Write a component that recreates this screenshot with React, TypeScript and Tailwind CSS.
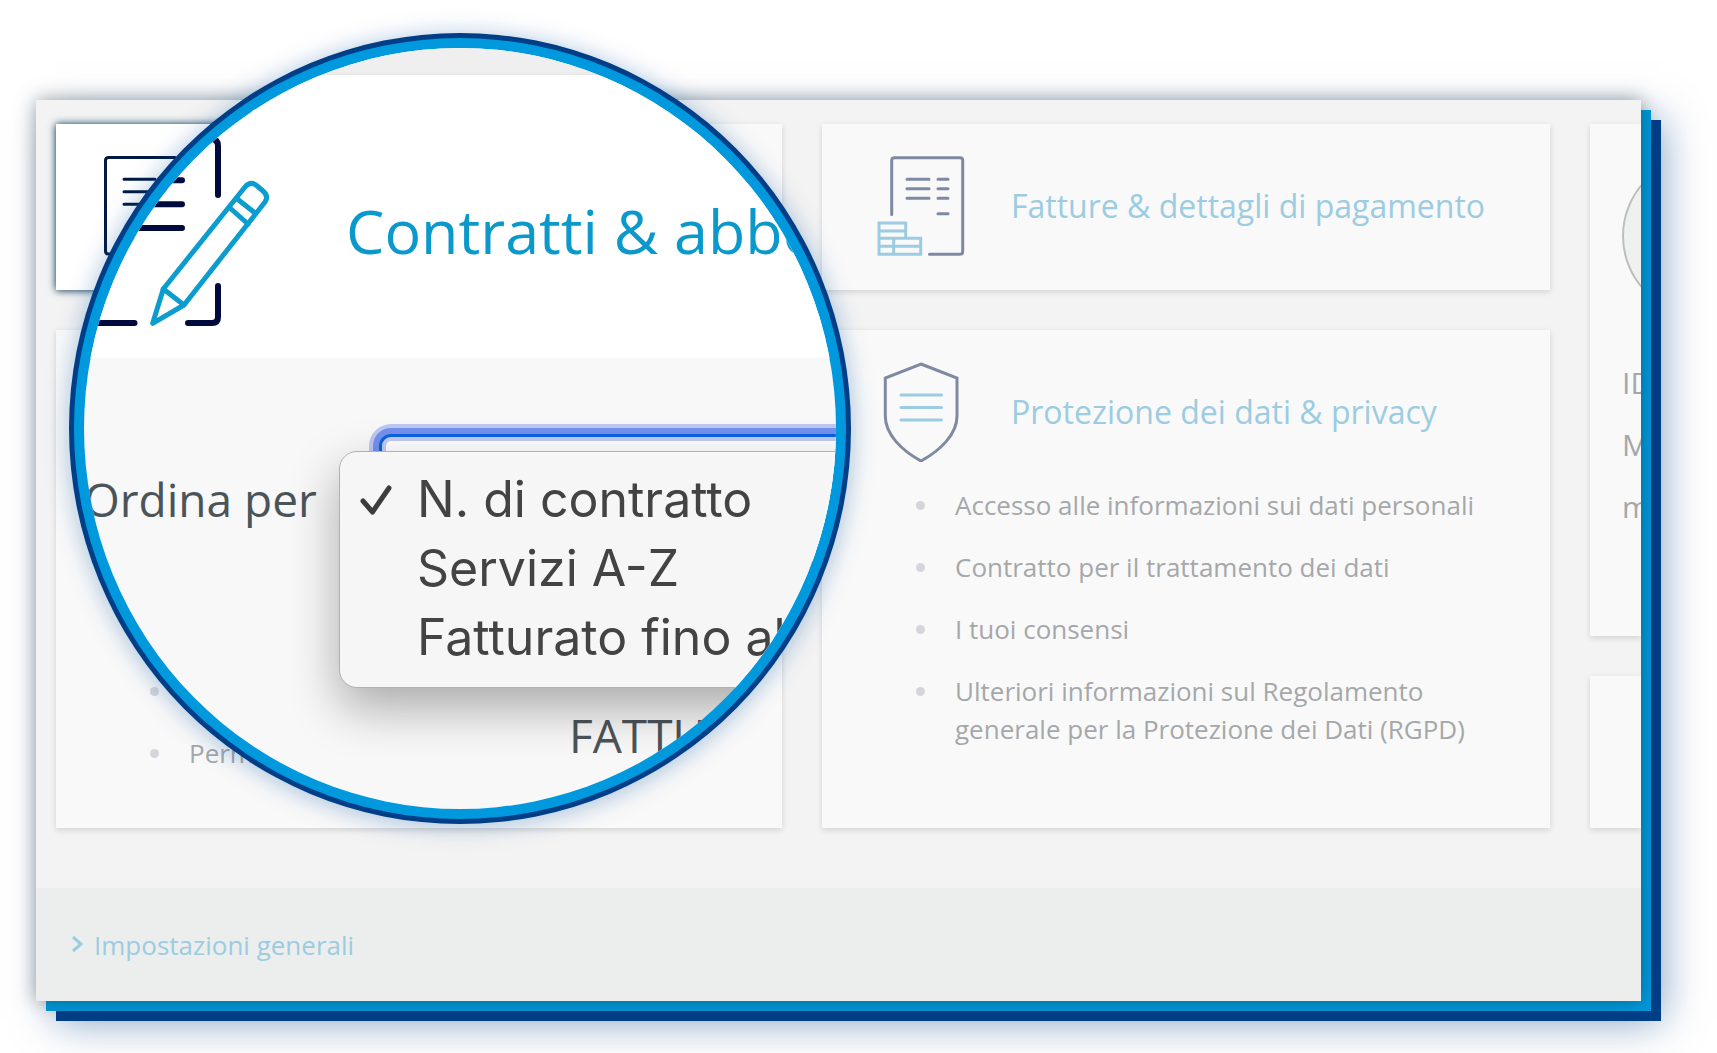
import React from 'react';

interface CardProps {
  title?: string;
  icon: React.ReactNode;
  items?: string[];
}

const privacyItems = [
  'Accesso alle informazioni sui dati personali',
  'Contratto per il trattamento dei dati',
  'I tuoi consensi',
  'Ulteriori informazioni sul Regolamento generale per la Protezione dei Dati (RGPD)',
];

const sortOptions = ['N. di contratto', 'Servizi A-Z', 'Fatturato fino al'];

const InvoiceIcon = () => (
  <svg viewBox="0 0 100 100" className="h-[100px] w-[100px] shrink-0" fill="none" strokeWidth="3" strokeLinecap="round" strokeLinejoin="round" aria-hidden="true">
    <g stroke="#7f89a2">
      <path d="M20.7 58.5V4.5Q20.7 1.7 23.5 1.7H89Q91.7 1.7 91.7 4.5V95.5Q91.7 98.3 89 98.3H58.5" />
      <path d="M36 23.3H58M36 32.7H58M36 42.3H58M67 23.3H77M67 32.7H77M67 42.3H77M67 57.7H77" />
    </g>
    <path stroke="#9ccce1" strokeLinejoin="miter" d="M8 67H34.7V82.3H49.7V98.3H8ZM8 75H34.7M8 82.3H34.7M8 90.3H49.7M22.7 82.3V98.3" />
  </svg>
);

const ShieldIcon = () => (
  <svg viewBox="0 0 100 100" className="h-[100px] w-[100px] shrink-0" fill="none" strokeWidth="3" strokeLinecap="round" aria-hidden="true">
    <path stroke="#7f89a2" d="M50 2L86 16V54C86 72 70 88 50 99C30 88 14.3 72 14.3 54V16Z" />
    <path stroke="#9ccce1" d="M30 33H70.5M30 45.5H70.5M30 58H70.5" />
  </svg>
);

const ContractIcon = () => (
  <svg viewBox="0 0 100 100" className="h-[100px] w-[100px] shrink-0" fill="none" stroke="#001a44" strokeWidth="3" strokeLinecap="round" aria-hidden="true">
    <path d="M71 1.5H4.5Q1.5 1.5 1.5 4.5V95Q1.5 98 4.5 98H41M20 23.3H51M20 35.7H51M20 48.3H51" />
  </svg>
);

const ContractIconLarge = () => (
  <svg viewBox="0 0 200 283" className="h-[283px] w-[200px] shrink-0" fill="none" strokeLinecap="round" strokeLinejoin="round" aria-hidden="true">
    <path stroke="#000b3b" strokeWidth="6" d="M110 64H127Q134 64 134 71V120M42 105.3H98M42 129.3H98M42 153H98M0 248H50.5M104 248H128Q134 248 134 242V211" />
    <g stroke="#0b9dd0" strokeWidth="5">
      <path d="M79.3 214L161 112Q166 106 172 110L179 116Q185 121 181 127L100 230L68.7 248.3Z" />
      <path d="M153.3 124L171 138M146 133L164 149M79.3 214L100 230" />
    </g>
  </svg>
);

const ItemList = ({ items }: { items: string[] }) => (
  <ul className="pl-[94px] pr-8 text-[26px] leading-[38px] text-[#a5a8aa]">
    {items.map((item) => (
      <li key={item} className="mb-6 flex min-h-[38px] gap-[30px]">
        <span className="mt-[15px] h-[9px] w-[9px] shrink-0 rounded-full bg-[#d4d6dc]" />
        <span>{item}</span>
      </li>
    ))}
  </ul>
);

const Card = ({ title, icon, items }: CardProps) => (
  <section className="bg-[#f9f9f9] shadow-[0_2px_6px_rgba(0,0,0,0.14)]">
    <div className="flex items-center gap-10 pt-8 pb-6 pl-[49px]">
      {icon}
      <h2 className="text-[32px] leading-10 whitespace-nowrap text-[#9ccce1]">
        <a href="#">{title}</a>
      </h2>
    </div>
    {items && <ItemList items={items} />}
  </section>
);

const Lens = () => (
  <div className="absolute -top-[67px] left-[33px] h-[791px] w-[782px] rounded-[50%] bg-[#003f87] p-[5px] shadow-[0_2px_24px_rgba(0,80,160,0.35)]">
    <div className="h-full rounded-[50%] bg-[#0099dd] p-[10px]">
      <div className="h-full overflow-hidden rounded-[50%] bg-[#f8f8f8]">
        <div className="h-[27px] bg-[#efefef] shadow-[inset_0_-2px_2px_rgba(0,0,0,0.03)]" />
        <div className="flex h-[283px] bg-white">
          <ContractIconLarge />
          <h2 className="pt-[114px] pl-[62px] text-[61px] leading-[84px] whitespace-nowrap text-[#0b99cc]">Contratti &amp; abbo</h2>
        </div>
        <div className="relative h-[451px]">
          <div className="flex h-[206px] items-center pt-[76px]">
            <label htmlFor="sort" className="w-[295px] shrink-0 text-[46px] leading-[60px] whitespace-nowrap text-[#4b5459]">
              Ordina per
            </label>
            <select
              id="sort"
              className="h-full w-[560px] shrink-0 appearance-none rounded-xl border-3 border-[#0b63dc] bg-white shadow-[inset_0_0_0_4px_#c3cbf2,0_0_0_6px_#7391ee,0_0_0_10px_#bcc8f3]"
            />
          </div>
          <p className="pt-[141px] pl-[485px] text-[46px] leading-[60px] whitespace-nowrap text-[#4b5459]">FATTU</p>
          <ul className="absolute top-[93px] left-[255px] w-[560px] rounded-[18px] border border-[#b0b0b0] bg-[#f6f6f6] pt-[13px] pb-[15px] font-['Inter',sans-serif] text-[50px] leading-[69px] text-[#434343] shadow-[0_20px_50px_rgba(0,0,0,0.32)]">
            {sortOptions.map((option, index) => (
              <li key={option}>
                <button type="button" className="flex w-full items-center pl-5 text-left whitespace-nowrap">
                  <span className="w-[57px] shrink-0">
                    {index === 0 && (
                      <svg viewBox="0 0 32 32" className="h-8 w-8" fill="none" stroke="#3d3d3d" strokeWidth="5" strokeLinecap="round" strokeLinejoin="round" aria-hidden="true">
                        <path d="M3 17L12.5 28L29 4" />
                      </svg>
                    )}
                  </span>
                  {option}
                </button>
              </li>
            ))}
          </ul>
        </div>
      </div>
    </div>
  </div>
);

export default function App() {
  return (
    <div className="min-h-screen overflow-hidden bg-white pt-[100px] pr-[76px] pb-[52px] pl-9 font-['Open_Sans',sans-serif]">
      <div className="relative">
        <main className="shadow-[0_0_18px_rgba(0,30,40,0.4),10px_10px_0_#0099dd,20px_20px_0_#003f87,20px_20px_40px_rgba(0,63,135,0.5)]">
          <div className="overflow-hidden bg-[#f3f3f3]">
            <div className="grid grid-cols-[minmax(0,726fr)_minmax(0,728fr)_minmax(0,51fr)] gap-10 pt-6 pb-[60px] pl-5">
              <div className="flex flex-col gap-10">
                <section className="bg-[#f9f9f9] shadow-[0_2px_6px_rgba(0,0,0,0.14)]">
                  <div className="w-1/3 bg-white pt-8 pb-[34px] pl-12 shadow-[0_0_8px_#063a60]">
                    <ContractIcon />
                  </div>
                </section>
                <section className="flex-1 bg-[#f9f9f9] pt-[342px] shadow-[0_2px_6px_rgba(0,0,0,0.14)]">
                  <ItemList items={['', 'Perm']} />
                </section>
              </div>

              <div className="grid grid-rows-[166px_498px] gap-10">
                <Card title="Fatture & dettagli di pagamento" icon={<InvoiceIcon />} />
                <Card title="Protezione dei dati & privacy" icon={<ShieldIcon />} items={privacyItems} />
              </div>

              <div className="flex flex-col gap-10">
                <section className="h-[512px] overflow-hidden bg-[#f9f9f9] pt-8 pl-8 shadow-[0_2px_6px_rgba(0,0,0,0.14)]">
                  <div className="h-40 w-40 rounded-full border-2 border-[#bcbfbe] bg-[#eff1f0]" />
                  <div className="flex flex-col gap-6 pt-12 text-[30px] leading-[38px] text-[#a5a8aa]">
                    <span>ID</span>
                    <span>M</span>
                    <span>m</span>
                  </div>
                </section>
                <section className="flex-1 bg-[#f9f9f9] shadow-[0_2px_6px_rgba(0,0,0,0.14)]" />
              </div>
            </div>

            <footer className="flex h-[113px] items-center bg-[#ebeeec] pl-9 text-[26px] leading-[38px] text-[#9ccce1]">
              <a href="#" className="flex items-center gap-[10px]">
                <svg viewBox="0 0 12 18" className="h-[18px] w-3" fill="none" stroke="currentColor" strokeWidth="3" aria-hidden="true">
                  <path d="M1 1L9 8L1 15" />
                </svg>
                Impostazioni generali
              </a>
            </footer>
          </div>
        </main>
        <Lens />
      </div>
    </div>
  );
}
